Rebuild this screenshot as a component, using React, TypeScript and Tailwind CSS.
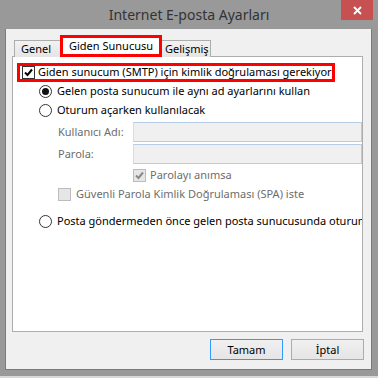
import React from "react";

const font = { fontFamily: '"Noto Sans", "Open Sans", sans-serif' };

function Check({ color }: { color: string }) {
  return (
    <svg width="9" height="9" viewBox="0 0 9 9">
      <path d="M1 4.5 L3.5 7 L8 1.5" fill="none" stroke={color} strokeWidth="2" />
    </svg>
  );
}

function Radio({ on }: { on?: boolean }) {
  return (
    <span className="w-[13px] h-[13px] rounded-full border border-[#333333] bg-white flex items-center justify-center shrink-0">
      {on && <span className="w-[7px] h-[7px] rounded-full bg-[#111111]" />}
    </span>
  );
}

export default function App() {
  return (
    <div className="w-[378px] h-[378px] bg-[#999999] flex flex-col overflow-hidden text-[11px] text-black" style={font}>
      {/* title bar */}
      <div className="relative h-[29px] flex items-center justify-center shrink-0">
        <span className="text-[14px] text-[#333333] -mt-[1px] whitespace-nowrap">Internet E-posta Ayarları</span>
        <div className="absolute top-0 right-[5px] w-[32px] h-[20px] bg-[#c75050] flex items-center justify-center">
          <svg width="9" height="9" viewBox="0 0 9 9">
            <path d="M1 1 L8 8 M8 1 L1 8" stroke="white" strokeWidth="1.8" />
          </svg>
        </div>
      </div>
      {/* client */}
      <div className="ml-[5px] w-[367px] h-[341px] bg-[#f0f0f0] border-l border-r border-b border-[#7a7a7a] pl-[6px] pr-[7px] pt-[6px] flex flex-col shrink-0">
        {/* tabs */}
        <div className="h-[22px] flex items-end ml-[2px] relative z-10 -mb-px">
          <div className="w-[46px] h-[17px] border-l border-t border-[#adadad] bg-gradient-to-b from-[#f2f2f2] to-[#e5e5e5] pl-[6px] leading-[16px] whitespace-nowrap">Genel</div>
          <div className="w-[102px] h-[22px] border-[3px] border-[#ff0000] bg-white pl-[6px] leading-[15px] whitespace-nowrap">Giden Sunucusu</div>
          <div className="w-[49px] h-[17px] border-t border-r border-[#adadad] bg-gradient-to-b from-[#f2f2f2] to-[#e5e5e5] pl-[3px] leading-[16px] whitespace-nowrap">Gelişmiş</div>
        </div>
        {/* panel */}
        <div className="mr-[1px] h-[276px] border border-[#adadad] bg-white flex flex-col overflow-hidden">
          <div className="mt-[6px] ml-[4px] w-[318px] h-[19px] border-[3px] border-[#ff0000] flex items-center pl-[2px] shrink-0">
            <span className="w-[13px] h-[13px] border border-[#333333] bg-white flex items-center justify-center shrink-0">
              <Check color="#000" />
            </span>
            <span className="ml-[3px] whitespace-nowrap">Giden sunucum (SMTP) için kimlik doğrulaması gerekiyor</span>
          </div>
          <div className="h-[19px] flex items-center ml-[26px] shrink-0">
            <Radio on />
            <span className="ml-[5px] whitespace-nowrap">Gelen posta sunucum ile aynı ad ayarlarını kullan</span>
          </div>
          <div className="h-[19px] flex items-center ml-[26px] shrink-0">
            <Radio />
            <span className="ml-[5px] whitespace-nowrap">Oturum açarken kullanılacak</span>
          </div>
          <div className="mt-[2px] h-[20px] flex items-center ml-[45px] shrink-0">
            <span className="w-[75px] text-[#6d6d6d] whitespace-nowrap">Kullanıcı Adı:</span>
            <div className="w-[229px] h-[20px] bg-[#f0f0f0] border border-[#b5cde6] border-l-[#d5dde6] border-r-[#c8c8c8]" />
          </div>
          <div className="mt-[2px] h-[20px] flex items-center ml-[45px] shrink-0">
            <span className="w-[75px] text-[#6d6d6d]">Parola:</span>
            <div className="w-[229px] h-[20px] bg-[#f0f0f0] border border-[#b5cde6] border-l-[#d5dde6] border-r-[#c8c8c8]" />
          </div>
          <div className="mt-[1px] h-[20px] flex items-center ml-[120px] shrink-0">
            <span className="w-[13px] h-[13px] border border-[#bcbcbc] bg-[#e6e6e6] flex items-center justify-center shrink-0">
              <Check color="#8a8a8a" />
            </span>
            <span className="ml-[4px] text-[#6d6d6d] whitespace-nowrap">Parolayı anımsa</span>
          </div>
          <div className="h-[19px] flex items-center ml-[45px] shrink-0">
            <span className="w-[13px] h-[13px] border border-[#bcbcbc] bg-[#e6e6e6] shrink-0" />
            <span className="ml-[5px] text-[#6d6d6d] whitespace-nowrap">Güvenli Parola Kimlik Doğrulaması (SPA) iste</span>
          </div>
          <div className="mt-[7px] h-[20px] flex items-center ml-[26px] shrink-0">
            <Radio />
            <span className="ml-[5px] whitespace-nowrap">Posta göndermeden önce gelen posta sunucusunda oturum aç</span>
          </div>
        </div>
        {/* buttons */}
        <div className="mt-[7px] flex justify-end gap-[8px]">
          <button className="w-[73px] h-[21px] border border-[#3399ff] bg-gradient-to-b from-[#f0f0f0] to-[#e5e5e5] text-[11px] leading-none">Tamam</button>
          <button className="w-[73px] h-[21px] border border-[#acacac] bg-gradient-to-b from-[#f0f0f0] to-[#e5e5e5] text-[11px] leading-none">İptal</button>
        </div>
      </div>
      <div className="h-[6px] shrink-0" />
      <div className="h-[2px] bg-[#d8d8d8] shrink-0" />
    </div>
  );
}
